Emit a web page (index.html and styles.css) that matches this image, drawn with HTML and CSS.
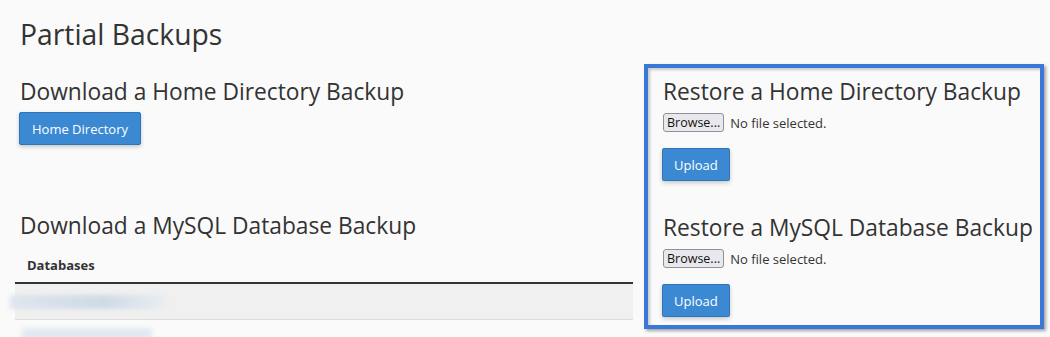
FILE: index.html
```html
<!DOCTYPE html>
<html>
<head>
<meta charset="utf-8">
<link rel="stylesheet" href="styles.css">
</head>
<body>
<div class="page">
  <h1 class="title">Partial Backups</h1>
  <div class="cols">
    <div class="col-left">
      <section class="block">
        <h2 class="heading">Download a Home Directory Backup</h2>
        <button class="btn">Home Directory</button>
      </section>
      <section class="block block-db">
        <h2 class="heading">Download a MySQL Database Backup</h2>
        <div class="table">
          <div class="thead">Databases</div>
          <div class="row row-odd"><span class="blur blur-1"></span></div>
          <div class="row"><span class="blur blur-2"></span></div>
        </div>
      </section>
    </div>
    <div class="col-right">
      <section class="block">
        <h2 class="heading">Restore a Home Directory Backup</h2>
        <div class="file"><span class="browse">Browse...</span><span class="nofile">No file selected.</span></div>
        <button class="btn btn-upload">Upload</button>
      </section>
      <section class="block block-restore2">
        <h2 class="heading">Restore a MySQL Database Backup</h2>
        <div class="file"><span class="browse">Browse...</span><span class="nofile">No file selected.</span></div>
        <button class="btn btn-upload">Upload</button>
      </section>
      <div class="highlight"></div>
    </div>
  </div>
</div>
</body>
</html>
```
FILE: styles.css
```css
html, body {
  margin: 0;
  padding: 0;
  background: #fafafa;
}
body {
  font-family: "Open Sans", "Noto Sans", sans-serif;
  color: #333;
  width: 1050px;
  height: 337px;
  overflow: hidden;
}
.page {
  padding: 0 15px;
}
.title {
  font-size: 28.3px;
  font-weight: 400;
  margin: 0;
  padding: 14px 0 0 5px;
  line-height: 40px;
}
.cols {
  display: grid;
  grid-template-columns: 618px 1fr;
  column-gap: 30px;
  margin-top: 23px;
}
.col-right {
  position: relative;
}
.block {
  display: flex;
  flex-direction: column;
  align-items: flex-start;
}
.col-left .heading {
  padding-left: 5px;
}
.heading {
  font-size: 22.75px;
  font-weight: 400;
  margin: 0;
  line-height: 30px;
  white-space: nowrap;
}
.btn {
  font-family: "Open Sans", "Noto Sans", sans-serif;
  font-size: 13px;
  color: #fff;
  background: #3a89d2;
  border: 1px solid #2f74b6;
  border-radius: 2px;
  box-shadow: 0 2px 4px rgba(0,0,0,0.2);
  height: 33px;
  padding: 0 12px;
  margin-top: 5px;
  margin-left: 4px;
  cursor: pointer;
}
.btn-upload {
  margin-left: -1px;
  margin-top: 16px;
  padding: 0 11px;
}
.block-db {
  margin-top: 66px;
}
.table {
  align-self: stretch;
  margin-top: 9px;
}
.thead {
  font-size: 13px;
  font-weight: 700;
  padding: 6px 12px 7px;
  border-bottom: 2px solid #333;
  line-height: 19px;
}
.row {
  height: 35px;
  border-bottom: 1px solid #ddd;
  position: relative;
}
.row-odd {
  background: #f0f0f0;
}
.blur {
  position: absolute;
  display: block;
  background: linear-gradient(90deg, #dfe6ee, #cfdae6 60%, #e8edf2);
  filter: blur(2px);
}
.blur-1 {
  left: -5px;
  top: 11px;
  width: 155px;
  height: 14px;
}
.blur-2 {
  left: 7px;
  top: 8px;
  width: 130px;
  height: 12px;
  background: #e3e9f0;
}
.file {
  display: flex;
  align-items: center;
  margin-top: 6px;
  font-size: 13px;
}
.browse {
  font-family: "Open Sans", "Noto Sans", sans-serif;
  font-size: 12.5px;
  line-height: 17px;
  padding: 0 3px;
  background: #e9e9ed;
  border: 1px solid #8f8f9d;
  border-radius: 3px;
  color: #111;
}
.nofile {
  margin-left: 6px;
  color: #333;
}
.block-restore2 {
  margin-top: 32px;
}
.highlight {
  position: absolute;
  left: -19px;
  top: -13px;
  width: 392px;
  height: 257px;
  border: 4px solid #3a78d8;
  box-shadow: 2px 2px 3px rgba(0,0,0,0.35), inset 2px 2px 3px rgba(0,0,0,0.2);
  pointer-events: none;
}
```
